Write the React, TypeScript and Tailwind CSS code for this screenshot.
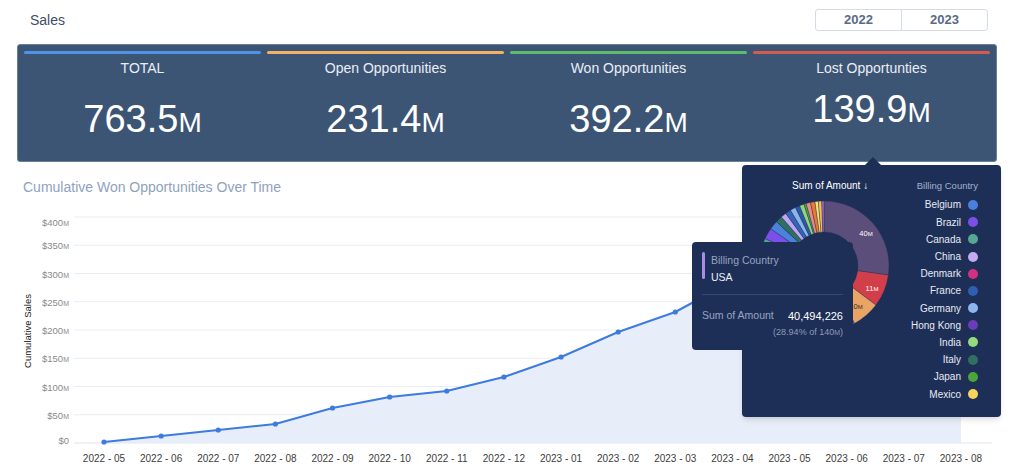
import React from 'react';

const kpis = [
  { title: 'TOTAL', value: '763.5', bar: 'bg-[#4f93e6]', valueCls: 'mt-[22px]' },
  { title: 'Open Opportunities', value: '231.4', bar: 'bg-[#eeb462]', valueCls: 'mt-[22px]' },
  { title: 'Won Opportunities', value: '392.2', bar: 'bg-[#5dbb6c]', valueCls: 'mt-[22px]' },
  { title: 'Lost Opportunties', value: '139.9', bar: 'bg-[#d55a4f]', valueCls: 'mt-[12px]' },
];

const legend = [
  { name: 'Belgium', color: '#4a80dc' },
  { name: 'Brazil', color: '#7d4fe9' },
  { name: 'Canada', color: '#56a894' },
  { name: 'China', color: '#c4aaf2' },
  { name: 'Denmark', color: '#d3307f' },
  { name: 'France', color: '#2e5fb0' },
  { name: 'Germany', color: '#8cb7ee' },
  { name: 'Hong Kong', color: '#6a3cb8' },
  { name: 'India', color: '#93da7e' },
  { name: 'Italy', color: '#2f7062' },
  { name: 'Japan', color: '#4ca53b' },
  { name: 'Mexico', color: '#f6d45c' },
];

const months = [
  '2022 - 05', '2022 - 06', '2022 - 07', '2022 - 08', '2022 - 09', '2022 - 10', '2022 - 11', '2022 - 12',
  '2023 - 01', '2023 - 02', '2023 - 03', '2023 - 04', '2023 - 05', '2023 - 06', '2023 - 07', '2023 - 08',
];
const ys = [442, 436, 430, 424, 408, 397, 391, 377, 357, 332, 312, 281, 262, 245, 232, 222];
const xs = months.map((_, i) => 104 + i * 57.13);

const grid = [443, 414.75, 386.5, 358.25, 330, 301.75, 273.5, 245.25, 217];
const yLabels = [
  { v: '$0', m: false, y: 440 },
  { v: '$50', m: true, y: 415 },
  { v: '$100', m: true, y: 387 },
  { v: '$150', m: true, y: 358 },
  { v: '$200', m: true, y: 330 },
  { v: '$250', m: true, y: 302 },
  { v: '$300', m: true, y: 274 },
  { v: '$350', m: true, y: 245 },
  { v: '$400', m: true, y: 222 },
];

const slices: [number, number, string][] = [
  [0, 98, '#5c4e7b'],
  [98, 127, '#d23f4b'],
  [127, 152, '#eaa466'],
  [152, 185, '#3f6ec8'],
  [185, 215, '#8b5fd6'],
  [215, 250, '#4fa596'],
  [250, 290, '#d3307f'],
  [290, 295, '#4fa596'],
  [295, 305, '#7b4fe8'],
  [305, 313, '#4b82dc'],
  [313, 319, '#2f6f60'],
  [319, 324, '#c0a5f0'],
  [324, 329, '#3463b8'],
  [329, 334, '#8ab4ec'],
  [334, 338, '#2d58a8'],
  [338, 342, '#90d67c'],
  [342, 344, '#4aa83c'],
  [344, 348, '#e88a8e'],
  [348, 352, '#ea7a2c'],
  [352, 355, '#f8e080'],
  [355, 358, '#f3c742'],
  [358, 360, '#b05fd0'],
];

function arc(cx: number, cy: number, r0: number, r1: number, a0: number, a1: number) {
  const p = (a: number, r: number) => {
    const t = (a * Math.PI) / 180;
    return [cx + r * Math.sin(t), cy - r * Math.cos(t)];
  };
  const large = a1 - a0 > 180 ? 1 : 0;
  const [x0, y0] = p(a0, r1);
  const [x1, y1] = p(a1, r1);
  const [x2, y2] = p(a1, r0);
  const [x3, y3] = p(a0, r0);
  return `M${x0},${y0} A${r1},${r1} 0 ${large} 1 ${x1},${y1} L${x2},${y2} A${r0},${r0} 0 ${large} 0 ${x3},${y3} Z`;
}

function Donut() {
  const cx = 82;
  const cy = 73;
  return (
    <svg width="150" height="150" viewBox="0 0 150 150" className="block">
      {slices.map(([a0, a1, c], i) => (
        <path key={i} d={arc(cx, cy, 34, 65, a0, a1)} fill={c} stroke="#1e2f57" strokeWidth="0.4" />
      ))}
      <text x="124" y="42.5" fill="#ffffff" fontSize="7.5" textAnchor="middle">
        40<tspan fontSize="6">M</tspan>
      </text>
      <text x="130" y="97.5" fill="#ffffff" fontSize="7.5" textAnchor="middle">
        11<tspan fontSize="6">M</tspan>
      </text>
      <text x="114" y="116" fill="#3a2a1a" fontSize="7.5" textAnchor="middle">
        10<tspan fontSize="6">M</tspan>
      </text>
    </svg>
  );
}

function Chart() {
  const area =
    `M${xs[0]},443 ` + xs.map((x, i) => `L${x},${ys[i]}`).join(' ') + ` L${xs[xs.length - 1]},443 Z`;
  const line = xs.map((x, i) => `${i === 0 ? 'M' : 'L'}${x},${ys[i]}`).join(' ');
  return (
    <svg width="1024" height="273" viewBox="0 197 1024 273" className="block">
      {grid.map((y, i) => (
        <line key={i} x1="74" x2="992" y1={y} y2={y} stroke={i === 0 ? '#dfe5ee' : '#e9edf3'} strokeWidth="1" />
      ))}
      <path d={area} fill="#e8eef9" />
      <path d={line} fill="none" stroke="#3d7be0" strokeWidth="2" strokeLinejoin="round" />
      {xs.map((x, i) => (
        <circle key={i} cx={x} cy={ys[i]} r="2.6" fill="#3d7be0" />
      ))}
      {yLabels.map((l, i) => (
        <text key={i} x="69" y={l.y + 3.5} fontSize="9.5" fill="#8a8a8a" textAnchor="end">
          {l.v}
          {l.m ? <tspan fontSize="7">M</tspan> : null}
        </text>
      ))}
      {months.map((m, i) => (
        <text key={i} x={xs[i]} y="461.5" fontSize="10" fill="#3c3c3c" textAnchor="middle">
          {m}
        </text>
      ))}
      <text transform="translate(31,331) rotate(-90)" fontSize="9.5" fill="#222" textAnchor="middle">
        Cumulative Sales
      </text>
    </svg>
  );
}

export default function App() {
  return (
    <div className="relative w-[1024px] h-[470px] overflow-hidden bg-white font-['Liberation_Sans',Arial,sans-serif]">
      <div className="flex h-[40px] items-center justify-between pl-[30px] pr-[36px]">
        <div className="text-[14px] text-[#3f4d66]">Sales</div>
        <div className="flex h-[22px] w-[173px] rounded-[3px] border border-[#d5dce6] text-[13px] font-bold text-[#5a6a86]">
          <div className="flex flex-1 items-center justify-center">2022</div>
          <div className="flex flex-1 items-center justify-center border-l border-[#d5dce6]">2023</div>
        </div>
      </div>

      <div className="mt-[4px] ml-[17px] grid h-[118px] w-[980px] grid-cols-4 gap-[6px] rounded-[3px] border border-[#6a7f9c] bg-[#3d5575] px-[6px] pt-[6px]">
        {kpis.map((k) => (
          <div key={k.title} className="flex flex-col items-center">
            <div className={`h-[3px] w-full rounded-full ${k.bar}`} />
            <div className="mt-[4px] h-[20px] text-[14px] leading-[20px] text-[#e9eef5]">{k.title}</div>
            <div className={`${k.valueCls} text-[38px] leading-none text-white`}>
              {k.value}
              <span className="text-[28px]">M</span>
            </div>
          </div>
        ))}
      </div>

      <div className="mt-[15px] h-[20px] pl-[23px] text-[14px] leading-[20px] text-[#8ea2be]">
        Cumulative Won Opportunities Over Time
      </div>
      <Chart />

      {/* caret */}
      <div className="absolute left-[865px] top-[157px] h-0 w-0 border-x-[8px] border-b-[8px] border-x-transparent border-b-[#1e2f57]" />

      {/* popup */}
      <div className="absolute left-[742px] top-[165px] flex h-[252px] w-[259px] rounded-[4px] bg-[#1e2f57] pt-[14px] shadow-md">
        <div className="flex w-[150px] shrink-0 flex-col">
          <div className="h-[14px] whitespace-nowrap pl-[50px] text-[10px] leading-[14px] text-white">Sum of Amount ↓</div>
          <Donut />
        </div>
        <div className="flex flex-1 flex-col items-end pr-[23px]">
          <div className="h-[14px] whitespace-nowrap text-[9.5px] leading-[14px] text-[#a3b1ca]">Billing Country</div>
          <div className="mt-[3.4px] flex flex-col items-end">
            {legend.map((l) => (
              <div key={l.name} className="flex h-[17.2px] items-center gap-[7px]">
                <span className="whitespace-nowrap text-[10px] text-[#e6eaf2]">{l.name}</span>
                <span className="h-[10px] w-[10px] shrink-0 rounded-full" style={{ backgroundColor: l.color }} />
              </div>
            ))}
          </div>
        </div>
      </div>

      {/* tooltip */}
      <div className="absolute left-[692px] top-[242px] h-[108px] w-[161px] rounded-[4px] bg-[#1e2f57] px-[10px] pt-[10px]">
        <div className="flex gap-[6px]">
          <div className="h-[27px] w-[3px] rounded-full bg-[#a88ce8]" />
          <div className="flex flex-col">
            <div className="h-[16px] text-[10.5px] leading-[16px] text-[#97a5c0]">Billing Country</div>
            <div className="h-[18px] text-[10.5px] leading-[18px] text-[#eef1f7]">USA</div>
          </div>
        </div>
        <div className="mt-[8px] h-px w-full bg-[#34497a]" />
        <div className="mt-[13px] flex h-[16px] items-center justify-between">
          <span className="text-[10.5px] text-[#97a5c0]">Sum of Amount</span>
          <span className="text-[11px] text-white">40,494,226</span>
        </div>
        <div className="mt-[1px] text-right text-[9px] leading-[14px] text-[#8d9bb8]">
          (28.94% of 140<span className="text-[7px]">M</span>)
        </div>
      </div>
    </div>
  );
}
